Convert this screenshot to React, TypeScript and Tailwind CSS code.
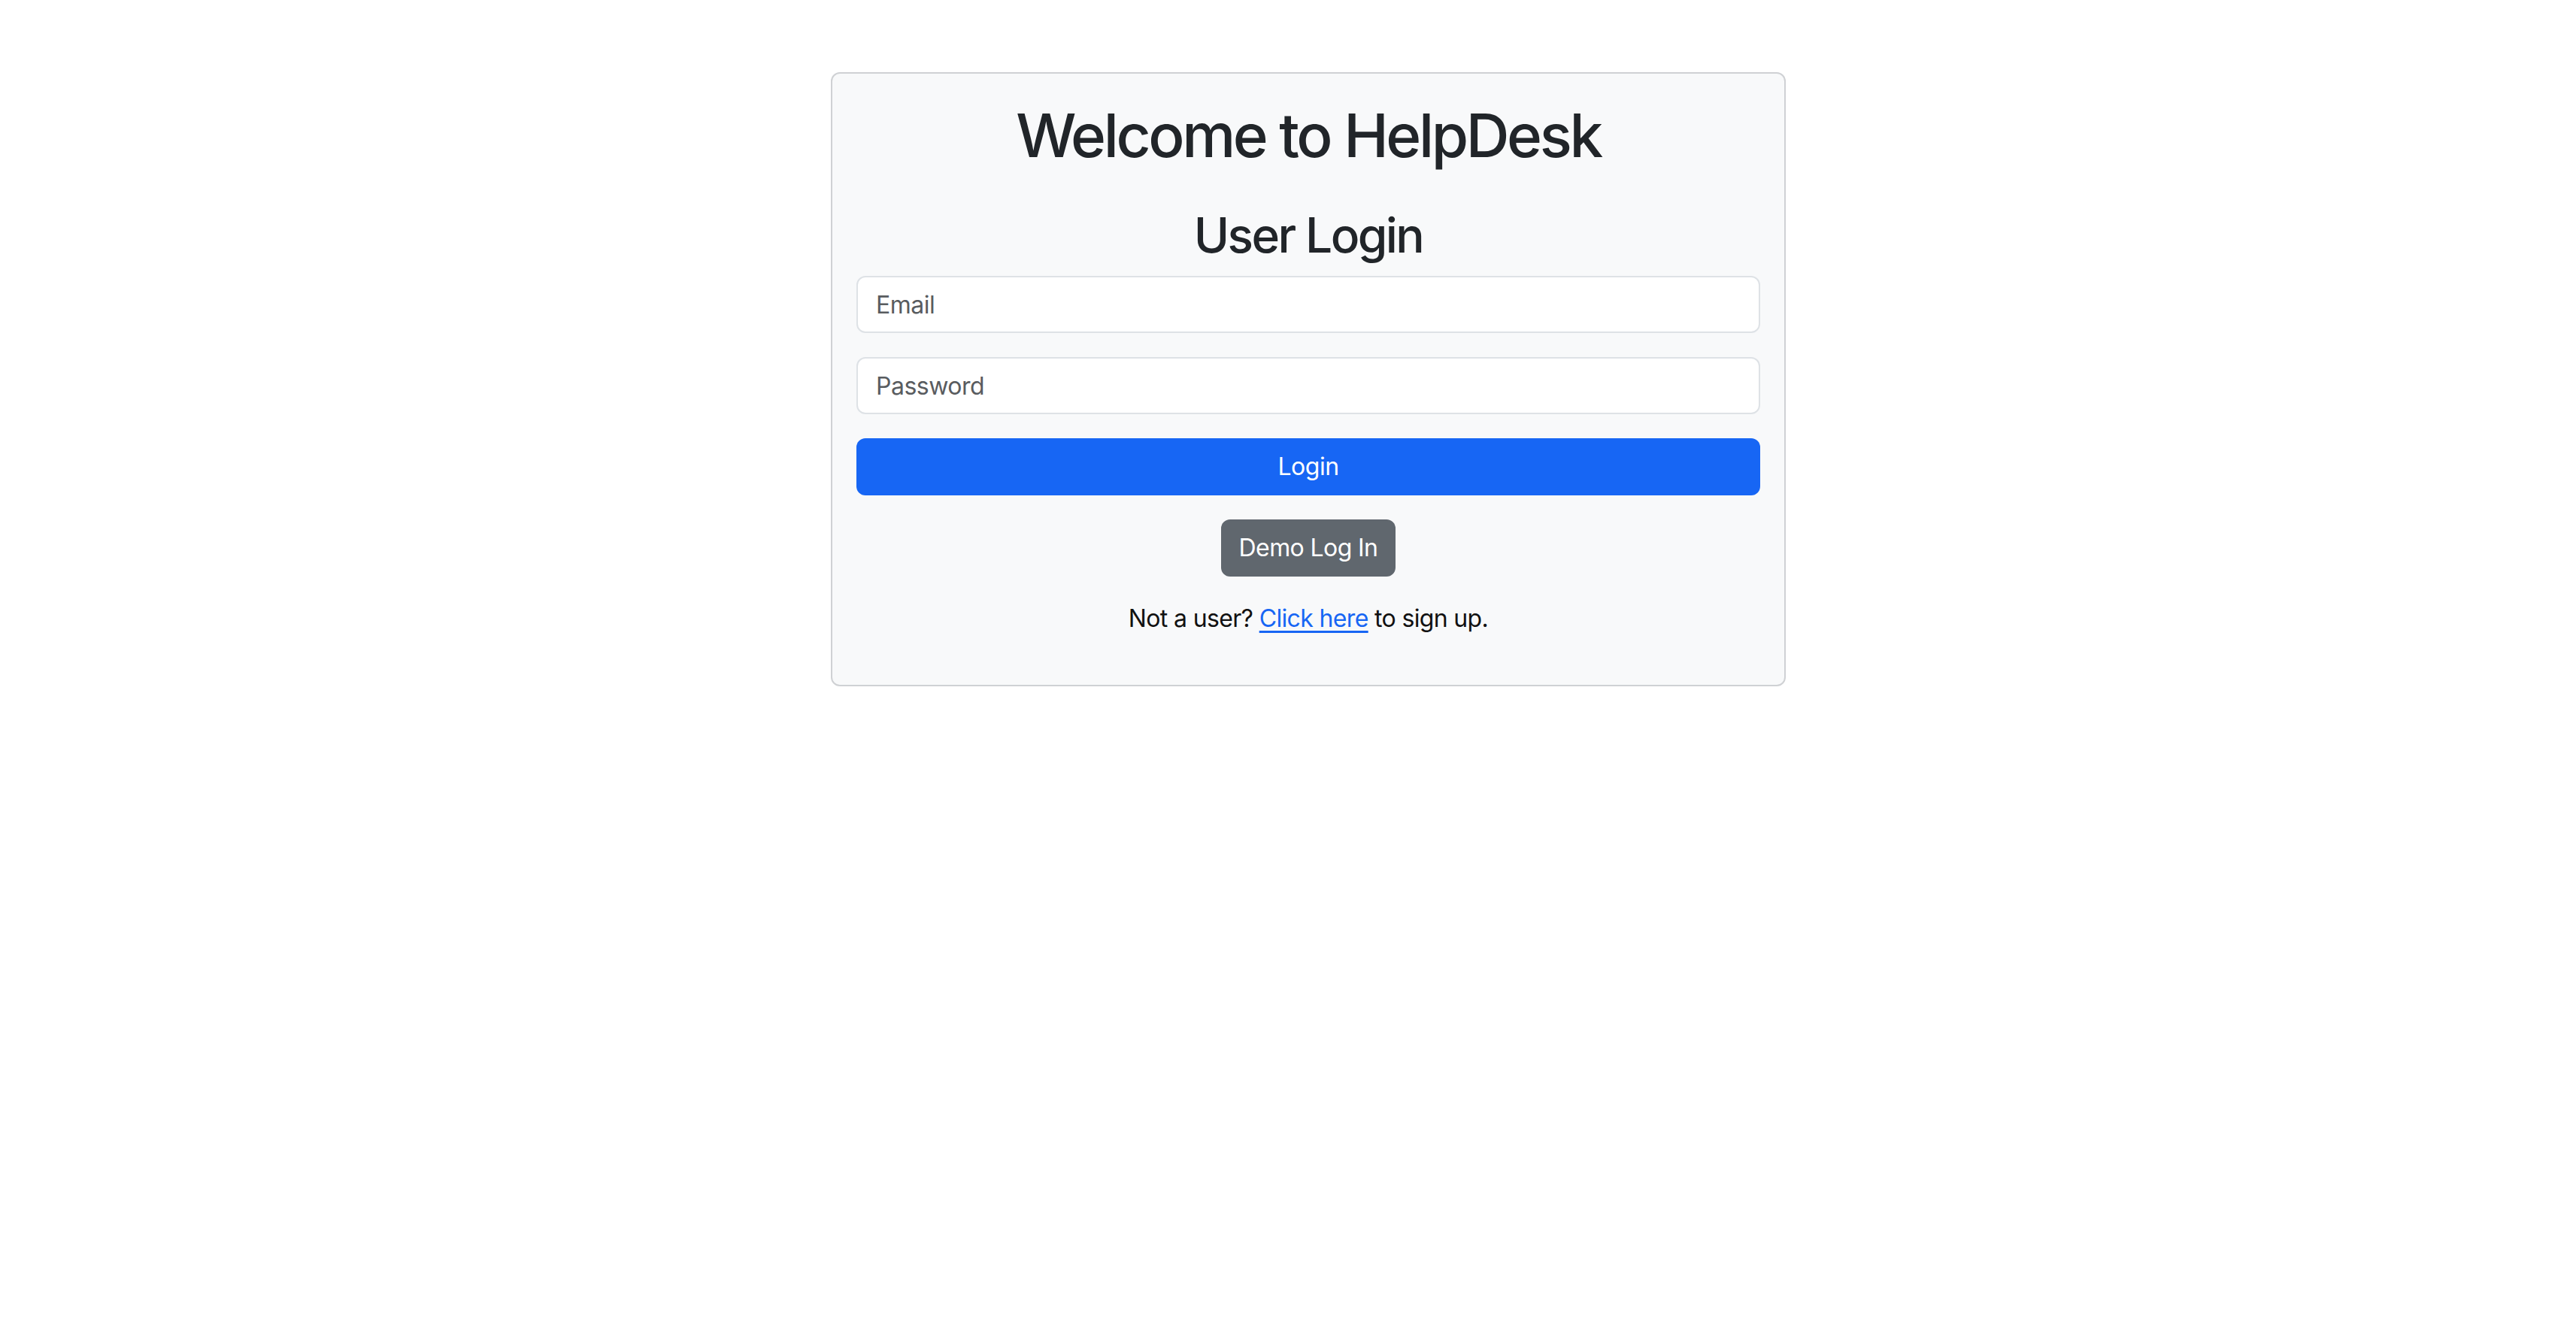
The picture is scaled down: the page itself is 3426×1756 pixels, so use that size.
const font = "font-['Inter','Liberation_Sans',sans-serif]";

const Field = ({ placeholder, type }: { placeholder: string; type: string }) => (
  <input
    type={type}
    placeholder={placeholder}
    className="block h-[76px] w-full rounded-[12px] border-2 border-[#dee2e6] bg-white px-[24px] text-[32px] tracking-[-0.5px] text-[#212529] placeholder:text-[#595c5f] outline-none"
  />
);

export default function App() {
  return (
    <div className={`min-h-screen bg-white ${font}`}>
      <div className="flex justify-center pl-[54px] pt-[96px]">
        <div className="w-[1270px] rounded-[12px] border-2 border-[#cfd1d4] bg-[#f8f9fa] p-[32px]">
          <h1 className="mb-[16px] mt-[2px] text-center text-[80px] font-medium leading-[96px] tracking-[-3.4px] text-[#212529]">
            Welcome to HelpDesk
          </h1>
          <h2 className="mb-[16px] mt-[46px] text-center text-[64px] font-medium leading-[77px] tracking-[-2.6px] text-[#212529]">
            User Login
          </h2>
          <form className="flex flex-col">
            <div className="mb-[32px]">
              <Field placeholder="Email" type="email" />
            </div>
            <div className="mb-[32px]">
              <Field placeholder="Password" type="password" />
            </div>
            <button
              type="button"
              className="h-[76px] w-full rounded-[12px] bg-[#1766f4] text-[32px] tracking-[-0.5px] text-white"
            >
              Login
            </button>
          </form>
          <div className="mt-[32px] flex justify-center">
            <button
              type="button"
              className="h-[76px] rounded-[12px] bg-[#60676e] px-[24px] text-[32px] tracking-[-0.6px] text-white"
            >
              Demo Log In
            </button>
          </div>
          <p className="mb-[32px] mt-[32px] text-center text-[32px] leading-[48px] tracking-[-0.65px] text-[#111]">
            Not a user?{" "}
            <a href="#" className="text-[#1766f4] underline underline-offset-[5px]">
              Click here
            </a>{" "}
            to sign up.
          </p>
        </div>
      </div>
    </div>
  );
}
